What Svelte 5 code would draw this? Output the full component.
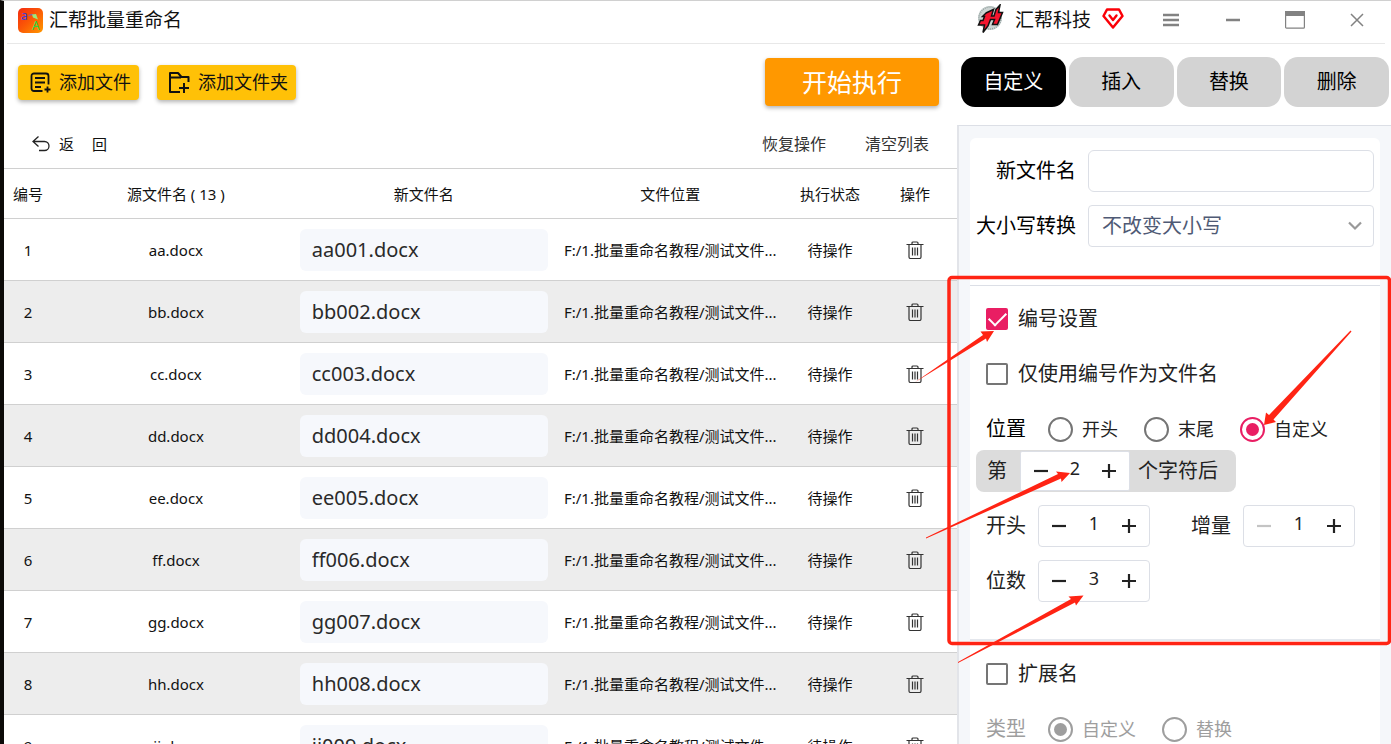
<script>
  const files = ['aa', 'bb', 'cc', 'dd', 'ee', 'ff', 'gg', 'hh', 'ii'].map((name, i) => ({
    no: i + 1,
    source: `${name}.docx`,
    target: `${name}00${i + 1}.docx`,
  }));
  const tabs = ['自定义', '插入', '替换', '删除'];

  let active = $state('自定义');
  let newName = $state('');
  let numbering = $state(true);
  let onlyNumber = $state(false);
  let extension = $state(false);
  let position = $state('自定义');
  let offset = $state(2);
  let start = $state(1);
  let step = $state(1);
  let digits = $state(3);
</script>

{#snippet minus()}
  <svg width="16" height="16" viewBox="0 0 16 16" aria-hidden="true"><path d="M1 8h14" stroke="currentColor" stroke-width="2.200" /></svg>
{/snippet}
{#snippet plus()}
  <svg width="16" height="16" viewBox="0 0 16 16" aria-hidden="true"><path d="M1 8h14M8 1v14" stroke="currentColor" stroke-width="2.200" /></svg>
{/snippet}

<div class="app">
  <header class="titlebar">
    <svg class="logo" width="25" height="25" viewBox="0 0 25 25" aria-hidden="true">
      <defs>
        <linearGradient id="logo-bg" x1="0" y1="0" x2="1" y2="1">
          <stop offset="0" stop-color="#f32a12" />
          <stop offset="0.5" stop-color="#fb5a05" />
          <stop offset="1" stop-color="#ff9a00" />
        </linearGradient>
      </defs>
      <rect width="25" height="25" rx="5" fill="url(#logo-bg)" />
      <text x="3" y="12" font-size="12" fill="#3b3fd8">a</text>
      <text x="14" y="22" font-size="12" fill="#22dd44">A</text>
      <path d="M10.500 8q3-2.500 5.500-.5" fill="none" stroke="#7a62b8" stroke-width="1.300" />
      <path d="M14 6.500l4-.5 2 5.500-5-2z" fill="#9bea7c" />
    </svg>
    <h1>汇帮批量重命名</h1>
    <div class="brand">
      <svg width="28" height="30" viewBox="0 0 28 30" aria-hidden="true">
        <circle cx="14" cy="14" r="12" fill="#ccd4d3" />
        <circle cx="14" cy="14" r="11" fill="none" stroke="#93a19f" stroke-width="1.500" stroke-dasharray="1 1" />
        <path d="M10 9L17.500 5.500 15.500 12H18L20 5.500 24 1 22.500 8.500H26.500L21.500 20.500H16.500L18.500 15.500H14.500L12 22 7 28.500 8.500 21H2.500L4.500 16.500H7L8.500 12.500H6.500z" fill="#f5152e" stroke="#111" stroke-width="1.500" stroke-linejoin="miter" />
      </svg>
      <span>汇帮科技</span>
      <svg width="22" height="22" viewBox="0 0 22 22" aria-hidden="true">
        <path d="M5 1.500h12L20.500 8 11 19.500 1.500 8z" fill="none" stroke="#fb0007" stroke-width="2.500" stroke-linejoin="round" />
        <path d="M7.500 7.500l3.500 4.500 3.500-4.500" fill="none" stroke="#fb0007" stroke-width="2.400" stroke-linecap="round" stroke-linejoin="round" />
      </svg>
    </div>
    <div class="window">
      <button aria-label="菜单">
        <svg width="16" height="14" viewBox="0 0 16 14"><path d="M0 2h16M0 7h16M0 12h16" stroke="#828282" stroke-width="2.600" /></svg>
      </button>
      <button aria-label="最小化">
        <svg width="16" height="14" viewBox="0 0 16 14"><path d="M1 7h14" stroke="#828282" stroke-width="2.500" /></svg>
      </button>
      <button aria-label="最大化">
        <svg width="20" height="18" viewBox="0 0 20 18"><rect x="0.600" y="0.600" width="18.800" height="16.600" rx="1" fill="none" stroke="#828282" stroke-width="1.200" /><path d="M0 0h20v5H0z" fill="#828282" /></svg>
      </button>
      <button aria-label="关闭">
        <svg width="14" height="14" viewBox="0 0 14 14"><path d="M1 1l12 12M13 1L1 13" stroke="#828282" stroke-width="1.500" /></svg>
      </button>
    </div>
  </header>

  <main>
    <section class="files">
      <div class="toolbar">
        <button class="add">
          <svg width="21" height="21" viewBox="0 0 21 21" fill="none" stroke="#111" stroke-width="1.800" aria-hidden="true">
            <path d="M12.500 19H4a2.500 2.500 0 0 1-2.500-2.500V4A2.500 2.500 0 0 1 4 1.500h12A2.500 2.500 0 0 1 18.500 4v8.500" />
            <path d="M5 6h10M5 10.500h10M5 15h6M17.500 14.500v6M14.500 17.500h6" />
          </svg>
          添加文件
        </button>
        <button class="add">
          <svg width="21" height="21" viewBox="0 0 21 21" fill="none" stroke="#111" stroke-width="2" stroke-linejoin="round" aria-hidden="true">
            <path d="M11 20H1V1h8l3.500 4H19.500v5M1 5.500h11" />
            <path d="M15 11v10M10 16h10" />
          </svg>
          添加文件夹
        </button>
        <button class="run">开始执行</button>
      </div>
      <div class="subbar">
        <button class="back">
          <svg width="18" height="16" viewBox="0 0 18 16" fill="none" stroke="#222" stroke-width="1.300" aria-hidden="true">
            <path d="M6.500.500L1 5.500l5.500 5M1 5.500h11.500a4.500 4.500 0 0 1 0 9H7" />
          </svg>
          <span>返</span><span>回</span>
        </button>
        <button class="link">恢复操作</button>
        <button class="link">清空列表</button>
      </div>
      <table>
        <colgroup>
          <col class="c-no" /><col class="c-name" /><col class="c-name" /><col /><col class="c-state" /><col class="c-op" />
        </colgroup>
        <thead>
          <tr>
            <th>编号</th><th>源文件名 ( 13 )</th><th>新文件名</th><th class="place">文件位置</th><th>执行状态</th><th>操作</th>
          </tr>
        </thead>
        <tbody>
          {#each files as file (file.no)}
            <tr>
              <td>{file.no}</td>
              <td>{file.source}</td>
              <td><input class="target" aria-label="新文件名" bind:value={file.target} /></td>
              <td class="place">F:/1.批量重命名教程/测试文件...</td>
              <td>待操作</td>
              <td>
                <button class="trash" aria-label="删除">
                  <svg width="18" height="18" viewBox="0 0 18 18" fill="none" stroke="#333" stroke-width="1.200">
                    <path d="M.5 3.500h17M6 3.500V2a1 1 0 0 1 1-1h4a1 1 0 0 1 1 1v1.500M3 3.500V16a1.500 1.500 0 0 0 1.500 1.500h9A1.500 1.500 0 0 0 15 16V3.500" />
                    <path d="M6.500 6.500v8M9 6.500v8M11.500 6.500v8" />
                  </svg>
                </button>
              </td>
            </tr>
          {/each}
        </tbody>
      </table>
    </section>

    <aside>
      <nav>
        {#each tabs as tab (tab)}
          <button class:active={active === tab} onclick={() => (active = tab)}>{tab}</button>
        {/each}
      </nav>
      <div class="panel">
        <section class="naming">
          <label for="new-name">新文件名</label>
          <input id="new-name" bind:value={newName} />
          <label for="letter-case">大小写转换</label>
          <div class="select">
            <select id="letter-case"><option>不改变大小写</option></select>
            <svg width="14" height="10" viewBox="0 0 14 10" aria-hidden="true"><path d="M1 1.500l6 6 6-6" fill="none" stroke="#999" stroke-width="2.200" /></svg>
          </div>
        </section>

        <section class="numbering">
          <label class="check"><input type="checkbox" bind:checked={numbering} />编号设置</label>
          <label class="check"><input type="checkbox" bind:checked={onlyNumber} />仅使用编号作为文件名</label>
          <div class="radios">
            <span class="caption">位置</span>
            {#each ['开头', '末尾', '自定义'] as option (option)}
              <label><input type="radio" name="position" value={option} bind:group={position} />{option}</label>
            {/each}
          </div>
          <div class="offset">
            <label for="offset">第</label>
            <div class="stepper">
              <button aria-label="减少" onclick={() => offset--}>{@render minus()}</button>
              <input id="offset" bind:value={offset} />
              <button aria-label="增加" onclick={() => offset++}>{@render plus()}</button>
            </div>
            <span>个字符后</span>
          </div>
          <div class="fields">
            <label for="start">开头</label>
            <div class="stepper">
              <button aria-label="减少" onclick={() => start--}>{@render minus()}</button>
              <input id="start" bind:value={start} />
              <button aria-label="增加" onclick={() => start++}>{@render plus()}</button>
            </div>
            <label class="second" for="step">增量</label>
            <div class="stepper">
              <button aria-label="减少" disabled={step <= 1} onclick={() => step--}>{@render minus()}</button>
              <input id="step" bind:value={step} />
              <button aria-label="增加" onclick={() => step++}>{@render plus()}</button>
            </div>
          </div>
          <div class="fields">
            <label for="digits">位数</label>
            <div class="stepper">
              <button aria-label="减少" onclick={() => digits--}>{@render minus()}</button>
              <input id="digits" bind:value={digits} />
              <button aria-label="增加" onclick={() => digits++}>{@render plus()}</button>
            </div>
          </div>
        </section>

        <section class="extension">
          <label class="check"><input type="checkbox" bind:checked={extension} />扩展名</label>
          <div class="radios off">
            <span class="caption">类型</span>
            <label><input type="radio" name="kind" checked disabled />自定义</label>
            <label><input type="radio" name="kind" disabled />替换</label>
          </div>
        </section>
      </div>
    </aside>
  </main>

  <svg class="marks" width="481" height="400" viewBox="910 270 481 400" aria-hidden="true">
    <rect x="949" y="277.500" width="440.500" height="366" rx="3" fill="none" stroke="#ff2414" stroke-width="3.500" />
    <g fill="#ff2414">
      <path d="M914.500 382.500L983 335 980.500 331.500 994 331 987 342 986 338.500z" />
      <path d="M1351.500 331.500L1273.500 419.500 1276 422 1264 425 1266 412.500 1269 415 1350.500 330.500z" />
      <path d="M926 537.500L1058 474 1056 471.500 1070 473 1061.500 482 1061 478.500 926 538.500z" />
      <path d="M958 662L1071 599 1068.500 596.500 1083.500 595.500 1076 605.500 1075 602.500 958 663z" />
    </g>
  </svg>
</div>

<style>
  :global(body) {
    margin: 0;
    background: #fff;
  }
  .app {
    position: relative;
    box-sizing: border-box;
    height: 100vh;
    overflow: hidden;
    display: flex;
    flex-direction: column;
    border-left: 4px solid #0c0a08;
    border-top: 1px solid #d0d0d0;
    color: #111;
    font: 15px/20px 'Noto Sans', 'Noto Sans CJK SC', sans-serif;
  }
  .app * {
    box-sizing: border-box;
  }
  button,
  input,
  select {
    font: inherit;
    color: inherit;
    margin: 0;
    padding: 0;
    border: 0;
    background: none;
  }
  button {
    display: flex;
    align-items: center;
    justify-content: center;
    cursor: pointer;
  }
  svg {
    flex: none;
    display: block;
  }

  .titlebar {
    display: flex;
    align-items: center;
    flex: none;
    height: 43px;
    margin: 0 6px 0 3px;
    padding: 0 18px 4px 11px;
    border-bottom: 1px solid #e8e8e8;
  }
  h1 {
    flex: 1;
    margin: 0 0 0 6px;
    font-size: 19px;
    font-weight: 400;
  }
  .brand {
    display: flex;
    align-items: center;
    gap: 11px;
    font-size: 19px;
  }
  .brand svg {
    margin-bottom: 3px;
  }
  .window {
    display: flex;
    align-items: center;
    gap: 41px;
    margin-left: 36px;
  }
  .window button {
    width: 21px;
    height: 20px;
  }

  main {
    flex: 1;
    min-height: 0;
    display: grid;
    grid-template-columns: minmax(0, 1fr) 434px;
  }
  .files {
    overflow: hidden;
  }
  .toolbar {
    display: flex;
    align-items: center;
    gap: 18px;
    height: 76px;
    padding: 0 18px 0 14px;
  }
  .add,
  .run {
    border-radius: 4px;
    box-shadow: 0 2px 4px rgba(0, 0, 0, 0.3);
  }
  .add {
    gap: 8px;
    height: 35px;
    padding: 0 8px 0 12px;
    background: #ffc107;
    font-size: 18px;
  }
  .run {
    width: 174px;
    height: 48px;
    margin-left: auto;
    background: #ff9800;
    color: #fff;
    font-size: 25px;
  }
  .subbar {
    display: flex;
    align-items: center;
    gap: 39px;
    height: 48px;
    padding: 0 28px;
    font-size: 16px;
  }
  .back {
    gap: 18px;
    margin-right: auto;
    font-size: 15px;
  }
  .back svg {
    margin-right: -9px;
  }
  .link {
    color: #333;
  }

  table {
    width: 100%;
    table-layout: fixed;
    border-collapse: collapse;
    border-top: 1px solid #d0d0d0;
    text-align: center;
  }
  .c-no {
    width: 48px;
  }
  .c-name {
    width: 26%;
  }
  .c-state {
    width: 86px;
  }
  .c-op {
    width: 84px;
  }
  th,
  td {
    padding: 0;
    font-weight: 400;
    white-space: nowrap;
    border-bottom: 1px solid #d0d0d0;
  }
  th {
    height: 50px;
  }
  td {
    height: 62px;
  }
  .place {
    padding-left: 6px;
  }
  tbody tr:nth-child(even) {
    background: #ededed;
  }
  .target {
    display: block;
    width: 100%;
    height: 42px;
    padding: 0 12px;
    border-radius: 6px;
    background: #f6f8fc;
    color: #2a2a2a;
    font-size: 20px;
  }
  .trash {
    margin: 0 auto;
  }

  aside {
    display: flex;
    flex-direction: column;
    min-height: 0;
  }
  nav {
    display: flex;
    flex: none;
    gap: 3px;
    height: 81px;
    padding: 13px 2px 18px 4px;
  }
  nav button {
    flex: 1;
    border-radius: 14px;
    background: #d3d3d3;
    color: #000;
    font-size: 20px;
  }
  nav .active {
    background: #000;
    color: #fff;
  }
  .panel {
    flex: 1;
    min-height: 0;
    overflow: hidden;
    padding: 12px 11px 0;
    border-top: 1px solid #dcdfe6;
    border-left: 2px solid #e2e4e9;
    background: #f5f7fa;
    color: #222;
    font-size: 20px;
  }
  .panel section {
    background: #fff;
  }
  .naming {
    display: grid;
    grid-template-columns: 106px 1fr;
    align-items: center;
    gap: 13px 12px;
    padding: 12px 6px 38px 0;
    border-radius: 6px 6px 0 0;
    color: #000;
  }
  .naming label {
    text-align: right;
  }
  .naming input,
  select {
    width: 100%;
    height: 42px;
    padding: 0 13px;
    border: 1px solid #dcdfe6;
    border-radius: 6px;
  }
  .select {
    display: flex;
    align-items: center;
  }
  select {
    appearance: none;
    border-radius: 4px;
    color: #4f5a75;
  }
  .select svg {
    margin-left: -26px;
    margin-right: 12px;
    pointer-events: none;
  }
  .numbering {
    display: flex;
    flex-direction: column;
    gap: 13px;
    padding: 12px 16px 37px;
    border-top: 1px solid #dcdfe6;
  }
  .extension {
    display: flex;
    flex-direction: column;
    gap: 13px;
    height: 130px;
    padding: 12px 16px 0;
    border-top: 2px solid #e4e7ed;
  }
  .check {
    display: flex;
    align-items: center;
    gap: 10px;
    height: 42px;
  }
  input[type='checkbox'],
  input[type='radio'] {
    appearance: none;
    display: grid;
    place-items: center;
    border: 2px solid #757575;
  }
  input[type='checkbox'] {
    width: 22px;
    height: 22px;
    border-radius: 2px;
  }
  input[type='checkbox']:checked {
    border-color: #e91e63;
    background: #e91e63;
  }
  input[type='checkbox']:checked::before {
    content: '';
    width: 15px;
    height: 8px;
    border: solid #fff;
    border-width: 0 0 2px 2px;
    transform: translateY(-2px) rotate(-45deg);
  }
  .radios {
    display: flex;
    align-items: center;
    gap: 26px;
    height: 42px;
    font-size: 18px;
  }
  .caption {
    margin-right: -4px;
    color: #000;
    font-size: 20px;
  }
  .radios label {
    display: flex;
    align-items: center;
    gap: 9px;
  }
  input[type='radio'] {
    width: 25px;
    height: 25px;
    border-radius: 50%;
  }
  input[type='radio']:checked {
    border-color: #e91e63;
  }
  input[type='radio']:checked::before {
    content: '';
    width: 13px;
    height: 13px;
    border-radius: 50%;
    background: #e91e63;
  }
  .off,
  .off .caption {
    color: #9e9e9e;
  }
  .off input[type='radio']:disabled {
    border-color: #9e9e9e;
  }
  .off input[type='radio']:checked::before {
    background: #9e9e9e;
  }
  .stepper {
    display: grid;
    grid-template-columns: 40px 1fr 40px;
    width: 112px;
    height: 42px;
    border: 1px solid #dcdfe6;
    border-radius: 4px;
    background: #fff;
  }
  .stepper input {
    width: 100%;
    padding-bottom: 6px;
    text-align: center;
    font-size: 18px;
  }
  .stepper button:disabled {
    color: #c4c4c4;
  }
  .offset {
    display: flex;
    align-items: center;
    align-self: flex-start;
    gap: 8px;
    height: 42px;
    margin: -13px 0 0 -10px;
    padding: 0 18px 0 11px;
    border-radius: 8px;
    background: #dcdcdc;
  }
  .offset label {
    margin-right: 5px;
  }
  .offset .stepper {
    width: 110px;
    height: 40px;
    border-radius: 2px;
  }
  .fields {
    display: flex;
    align-items: center;
    gap: 12px;
  }
  .second {
    margin-left: 29px;
  }
  .marks {
    position: absolute;
    top: 269px;
    right: 0;
    pointer-events: none;
  }
</style>
